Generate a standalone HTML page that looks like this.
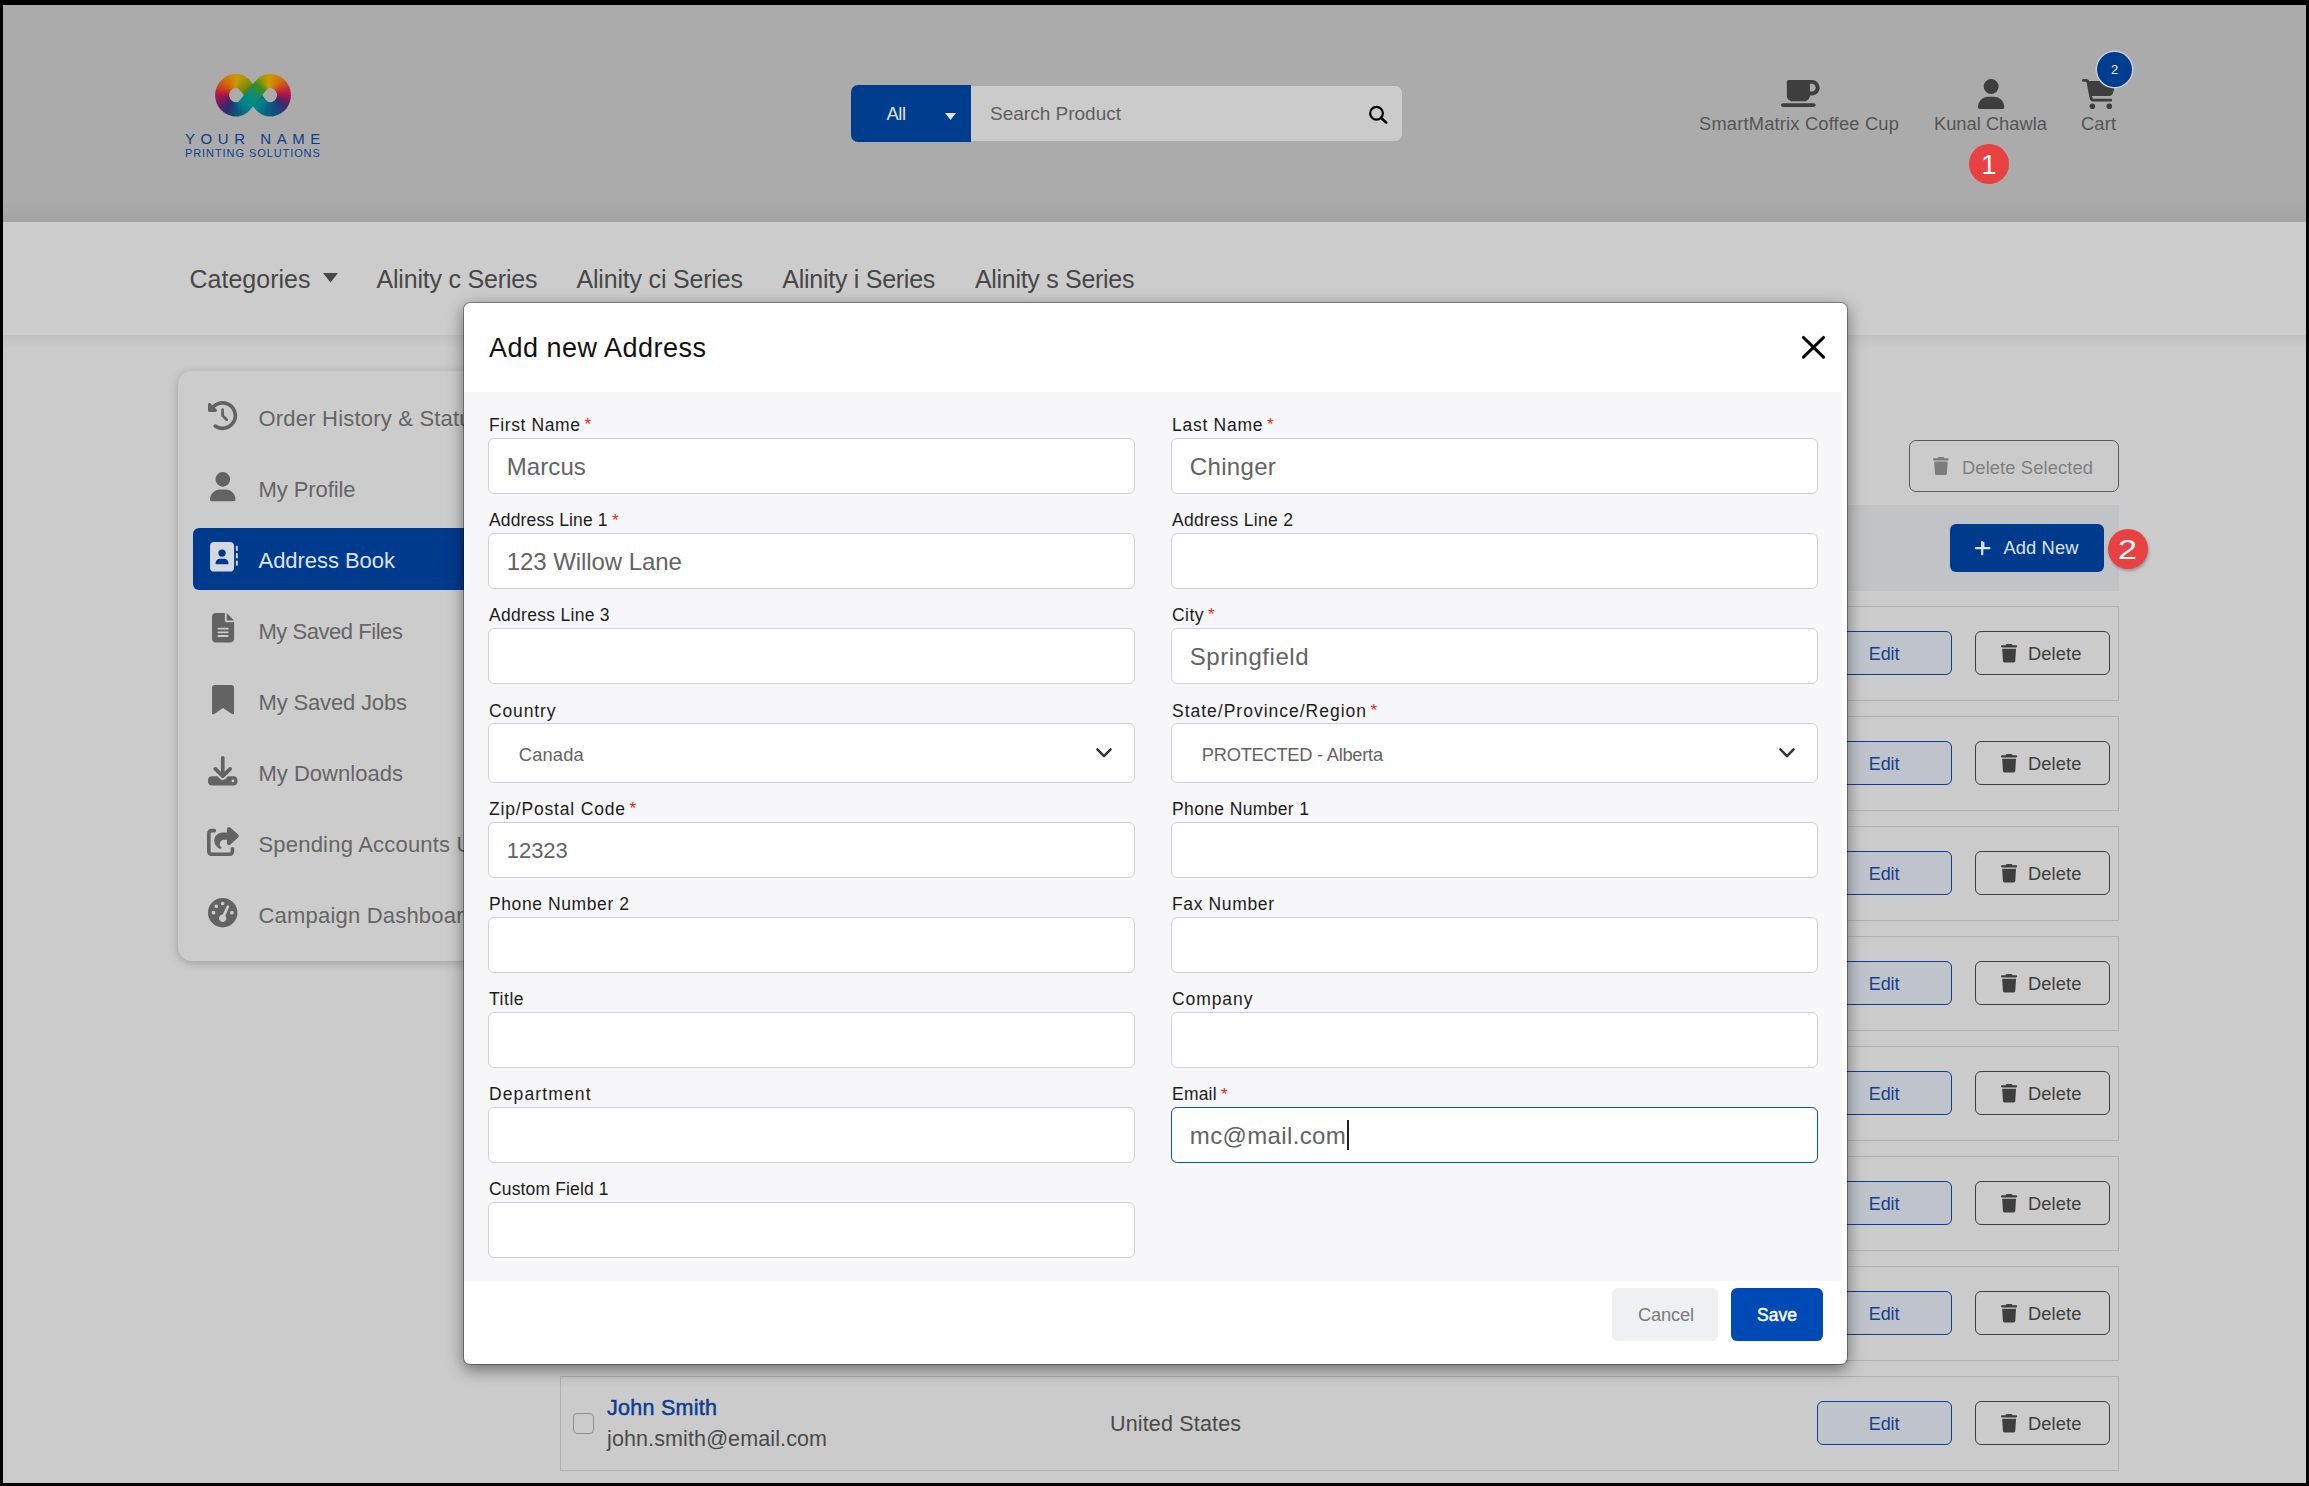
<!DOCTYPE html>
<html><head><meta charset="utf-8"><title>Add new Address</title>
<style>
html,body{margin:0;padding:0;}
body{width:2309px;height:1486px;position:relative;overflow:hidden;background:#cbcbcb;font-family:"Liberation Sans",sans-serif;}
.a{position:absolute;}
.t{position:absolute;white-space:nowrap;line-height:1;}
</style></head><body>
<div class="a" style="left:0px;top:0px;width:2309px;height:222px;background:#ababab;"></div>
<div class="a" style="left:0px;top:200px;width:2309px;height:22px;background:linear-gradient(#ababab,#a4a4a4);"></div>
<div class="a" style="left:0px;top:222px;width:2309px;height:113px;background:#cccccc;"></div>
<div class="a" style="left:0px;top:335px;width:2309px;height:14px;background:linear-gradient(#c1c1c1,#cbcbcb);"></div>
<svg class="a" style="left:0;top:0;overflow:visible" width="1" height="1"><g><path d="M237.20 80.75L233.92 80.97" stroke="#cf9801" stroke-width="13.8"/><path d="M235.31 80.79L232.09 81.43" stroke="#d08f03" stroke-width="13.8"/><path d="M233.44 81.07L230.33 82.12" stroke="#d18605" stroke-width="13.8"/><path d="M231.62 81.59L228.67 83.04" stroke="#d17d07" stroke-width="13.8"/><path d="M229.88 82.34L227.15 84.16" stroke="#d27509" stroke-width="13.8"/><path d="M228.26 83.31L225.79 85.48" stroke="#d16a0d" stroke-width="13.8"/><path d="M226.78 84.49L224.61 86.96" stroke="#ce5e10" stroke-width="13.8"/><path d="M225.46 85.85L223.64 88.58" stroke="#cc5314" stroke-width="13.8"/><path d="M224.34 87.37L222.89 90.32" stroke="#ca4718" stroke-width="13.8"/><path d="M223.42 89.03L222.37 92.14" stroke="#c63a21" stroke-width="13.8"/><path d="M222.73 90.79L222.09 94.01" stroke="#be2a32" stroke-width="13.8"/><path d="M222.27 92.62L222.05 95.90" stroke="#b71a43" stroke-width="13.8"/><path d="M222.05 94.50L222.27 97.78" stroke="#a9144f" stroke-width="13.8"/><path d="M222.09 96.39L222.73 99.61" stroke="#941755" stroke-width="13.8"/><path d="M222.37 98.26L223.42 101.37" stroke="#7f1a5b" stroke-width="13.8"/><path d="M222.89 100.08L224.34 103.03" stroke="#6b1d61" stroke-width="13.8"/><path d="M223.64 101.82L225.46 104.55" stroke="#582066" stroke-width="13.8"/><path d="M224.61 103.44L226.78 105.91" stroke="#4c2469" stroke-width="13.8"/><path d="M225.79 104.92L228.26 107.09" stroke="#40286b" stroke-width="13.8"/><path d="M227.15 106.24L229.88 108.06" stroke="#352b6e" stroke-width="13.8"/><path d="M228.67 107.36L231.62 108.81" stroke="#293070" stroke-width="13.8"/><path d="M230.33 108.28L233.44 109.33" stroke="#223974" stroke-width="13.8"/><path d="M232.09 108.97L235.31 109.61" stroke="#1a4278" stroke-width="13.8"/><path d="M233.92 109.43L237.20 109.65" stroke="#134b7c" stroke-width="13.8"/><path d="M268.90 80.75L272.18 80.97" stroke="#cf9801" stroke-width="13.8"/><path d="M270.79 80.79L274.01 81.43" stroke="#d09003" stroke-width="13.8"/><path d="M272.66 81.07L275.77 82.12" stroke="#d18805" stroke-width="13.8"/><path d="M274.48 81.59L277.43 83.04" stroke="#d18007" stroke-width="13.8"/><path d="M276.22 82.34L278.95 84.16" stroke="#d27809" stroke-width="13.8"/><path d="M277.84 83.31L280.31 85.48" stroke="#d06b11" stroke-width="13.8"/><path d="M279.32 84.49L281.49 86.96" stroke="#cd5a1b" stroke-width="13.8"/><path d="M280.64 85.85L282.46 88.58" stroke="#ca4a25" stroke-width="13.8"/><path d="M281.76 87.37L283.21 90.32" stroke="#c73a2f" stroke-width="13.8"/><path d="M282.68 89.03L283.73 92.14" stroke="#c42a39" stroke-width="13.8"/><path d="M283.37 90.79L284.01 94.01" stroke="#b92241" stroke-width="13.8"/><path d="M283.83 92.62L284.05 95.90" stroke="#ac1b49" stroke-width="13.8"/><path d="M284.05 94.50L283.83 97.78" stroke="#a01450" stroke-width="13.8"/><path d="M284.01 96.39L283.37 99.61" stroke="#881958" stroke-width="13.8"/><path d="M283.73 98.26L282.68 101.37" stroke="#701e5f" stroke-width="13.8"/><path d="M283.21 100.08L281.76 103.03" stroke="#592366" stroke-width="13.8"/><path d="M282.46 101.82L280.64 104.55" stroke="#41286e" stroke-width="13.8"/><path d="M281.49 103.44L279.32 105.91" stroke="#352f72" stroke-width="13.8"/><path d="M280.31 104.92L277.84 107.09" stroke="#2d3775" stroke-width="13.8"/><path d="M278.95 106.24L276.22 108.06" stroke="#263e78" stroke-width="13.8"/><path d="M277.43 107.36L274.48 108.81" stroke="#1f457a" stroke-width="13.8"/><path d="M275.77 108.28L272.66 109.33" stroke="#184c7d" stroke-width="13.8"/><path d="M274.01 108.97L270.79 109.61" stroke="#12527e" stroke-width="13.8"/><path d="M272.18 109.43L268.90 109.65" stroke="#0d577f" stroke-width="13.8"/><path d="M235.80 80.73L238.99 81.05" stroke="#c99b01" stroke-width="13.8"/><path d="M237.63 80.77L240.62 81.69" stroke="#bd9802" stroke-width="13.8"/><path d="M239.33 81.16L242.10 82.60" stroke="#b19603" stroke-width="13.8"/><path d="M240.91 81.87L243.47 83.72" stroke="#a69305" stroke-width="13.8"/><path d="M242.39 82.84L244.76 85.02" stroke="#9a9106" stroke-width="13.8"/><path d="M243.77 84.03L246.00 86.45" stroke="#8e8e08" stroke-width="13.8"/><path d="M245.08 85.40L247.21 87.98" stroke="#828c09" stroke-width="13.8"/><path d="M246.34 86.89L248.41 89.58" stroke="#75870b" stroke-width="13.8"/><path d="M247.56 88.46L249.62 91.19" stroke="#637e0f" stroke-width="13.8"/><path d="M248.77 90.08L250.86 92.78" stroke="#517613" stroke-width="13.8"/><path d="M249.99 91.69L252.16 94.30" stroke="#3f6d17" stroke-width="13.8"/><path d="M251.24 93.25L253.53 95.71" stroke="#2c6a32" stroke-width="13.8"/><path d="M252.57 94.69L254.86 97.15" stroke="#186a56" stroke-width="13.8"/><path d="M253.94 96.10L256.11 98.71" stroke="#096c72" stroke-width="13.8"/><path d="M255.24 97.62L257.33 100.32" stroke="#077178" stroke-width="13.8"/><path d="M256.48 99.21L258.54 101.94" stroke="#05777f" stroke-width="13.8"/><path d="M257.69 100.82L259.76 103.51" stroke="#037d85" stroke-width="13.8"/><path d="M258.89 102.42L261.02 105.00" stroke="#01828c" stroke-width="13.8"/><path d="M260.10 103.95L262.33 106.37" stroke="#01818e" stroke-width="13.8"/><path d="M261.34 105.38L263.71 107.56" stroke="#027a8b" stroke-width="13.8"/><path d="M262.63 106.68L265.19 108.53" stroke="#047389" stroke-width="13.8"/><path d="M264.00 107.80L266.77 109.24" stroke="#066c86" stroke-width="13.8"/><path d="M265.48 108.71L268.47 109.63" stroke="#086584" stroke-width="13.8"/><path d="M267.11 109.35L270.30 109.67" stroke="#095e81" stroke-width="13.8"/><path d="M235.80 109.67L238.99 109.35" stroke="#0e547f" stroke-width="13.8"/><path d="M237.63 109.63L240.62 108.71" stroke="#0b5d82" stroke-width="13.8"/><path d="M239.33 109.24L242.10 107.80" stroke="#096684" stroke-width="13.8"/><path d="M240.91 108.53L243.47 106.68" stroke="#066f86" stroke-width="13.8"/><path d="M242.39 107.56L244.76 105.38" stroke="#047888" stroke-width="13.8"/><path d="M243.77 106.37L246.00 103.95" stroke="#01818b" stroke-width="13.8"/><path d="M245.08 105.00L247.21 102.42" stroke="#01868a" stroke-width="13.8"/><path d="M246.34 103.51L248.41 100.82" stroke="#028887" stroke-width="13.8"/><path d="M247.56 101.94L249.62 99.21" stroke="#048884" stroke-width="13.8"/><path d="M248.77 100.32L250.86 97.62" stroke="#068a80" stroke-width="13.8"/><path d="M249.99 98.71L252.16 96.10" stroke="#088a7d" stroke-width="13.8"/><path d="M251.24 97.15L253.53 94.69" stroke="#098c7a" stroke-width="13.8"/><path d="M252.57 95.71L254.86 93.25" stroke="#0f8c70" stroke-width="13.8"/><path d="M253.94 94.30L256.11 91.69" stroke="#188b5f" stroke-width="13.8"/><path d="M255.24 92.78L257.33 90.08" stroke="#218b4e" stroke-width="13.8"/><path d="M256.48 91.19L258.54 88.46" stroke="#2a8b3e" stroke-width="13.8"/><path d="M257.69 89.58L259.76 86.89" stroke="#338a2d" stroke-width="13.8"/><path d="M258.89 87.98L261.02 85.40" stroke="#3f8b1e" stroke-width="13.8"/><path d="M260.10 86.45L262.33 84.03" stroke="#598f17" stroke-width="13.8"/><path d="M261.34 85.02L263.71 82.84" stroke="#729310" stroke-width="13.8"/><path d="M262.63 83.72L265.19 81.87" stroke="#8a9709" stroke-width="13.8"/><path d="M264.00 82.60L266.77 81.16" stroke="#a19a04" stroke-width="13.8"/><path d="M265.48 81.69L268.47 80.77" stroke="#b39b03" stroke-width="13.8"/><path d="M267.11 81.05L270.30 80.73" stroke="#c69c01" stroke-width="13.8"/></g></svg>
<div class="t" style="left:185px;top:131.00px;font-size:15px;color:#0e3e8e;letter-spacing:5.55px;">YOUR NAME</div>
<div class="t" style="left:185px;top:148.00px;font-size:11px;color:#0e3e8e;letter-spacing:0.92px;">PRINTING SOLUTIONS</div>
<div class="a" style="left:851px;top:85px;width:120px;height:57px;background:#003d8f;border-radius:7px 0 0 7px;"></div>
<div class="t" style="left:886.5px;top:105.00px;font-size:18.5px;color:#dfe4ee;letter-spacing:-0.531px;">All</div>
<svg class="a" style="left:944.5px;top:112.8px;" width="11" height="7" viewBox="0 0 11 7"><path d="M0 0 L11 0 L5.5 7 Z" fill="#dfe4ee"/></svg>
<div class="a" style="left:971px;top:86px;width:431px;height:55px;background:#cbcbcb;border-radius:0 7px 7px 0;"></div>
<div class="t" style="left:990px;top:104.00px;font-size:19px;color:#5f5f5f;letter-spacing:0.003px;">Search Product</div>
<svg class="a" style="left:1368px;top:105px;" width="21" height="21" viewBox="0 0 21 21"><circle cx="8.5" cy="8.3" r="6.35" fill="none" stroke="#000" stroke-width="2.2"/><path d="M13.2 13 L18.2 17.6" stroke="#000" stroke-width="2.6" stroke-linecap="round"/></svg>
<svg class="a" style="left:1780.5px;top:80px;overflow:visible;" width="38.6" height="27" viewBox="0 32 640 448"><path d="M96 64c0-17.7 14.3-32 32-32H448h64c70.7 0 128 57.3 128 128s-57.3 128-128 128H480c0 53-43 96-96 96H192c-53 0-96-43-96-96V64zM480 224h32c35.3 0 64-28.7 64-64s-28.7-64-64-64H480V224zM32 416H544c17.7 0 32 14.3 32 32s-14.3 32-32 32H32c-17.7 0-32-14.3-32-32s14.3-32 32-32z" fill="#3e3e3e"/></svg>
<div class="t" style="left:1699px;top:115.00px;font-size:18.3px;color:#555555;letter-spacing:0.193px;">SmartMatrix Coffee Cup</div>
<svg class="a" style="left:1977.5px;top:78.5px;overflow:visible;" width="26.3" height="30.1" viewBox="0 0 448 512"><path d="M224 256A128 128 0 1 0 224 0a128 128 0 1 0 0 256zm-45.7 48C79.8 304 0 383.8 0 482.3C0 498.7 13.3 512 29.7 512H418.3c16.4 0 29.7-13.3 29.7-29.7C448 383.8 368.2 304 269.7 304H178.3z" fill="#3e3e3e"/></svg>
<div class="t" style="left:1934px;top:115.00px;font-size:18.3px;color:#555555;letter-spacing:0.007px;">Kunal Chawla</div>
<svg class="a" style="left:2081.5px;top:78.5px;overflow:visible;" width="33.9" height="30.1" viewBox="0 0 576 512"><path d="M0 24C0 10.7 10.7 0 24 0H69.5c22 0 41.5 12.8 50.6 32h411c26.3 0 45.5 25 38.6 50.4l-41 152.3c-8.5 31.4-37 53.3-69.5 53.3H170.7l5.4 28.5c2.2 11.3 12.1 19.5 23.6 19.5H488c13.3 0 24 10.7 24 24s-10.7 24-24 24H199.7c-34.6 0-64.3-24.6-70.7-58.5L77.4 54.5c-.7-3.8-4-6.5-7.9-6.5H24C10.7 48 0 37.3 0 24zM128 464a48 48 0 1 1 96 0 48 48 0 1 1 -96 0zm336-48a48 48 0 1 1 0 96 48 48 0 1 1 0-96z" fill="#3e3e3e"/></svg>
<div class="t" style="left:2081px;top:115.00px;font-size:18.3px;color:#555555;letter-spacing:0.142px;">Cart</div>
<div class="a" style="left:2097px;top:51.5px;width:35px;height:35px;background:#003d8f;border-radius:50%;box-shadow:0 0 0 1.5px #c8cdd6;"></div>
<div class="t" style="left:2111px;top:63.00px;font-size:13px;color:#e6e9f0;">2</div>
<div class="a" style="left:1969px;top:144px;width:40px;height:40px;background:#e84142;border-radius:50%;"></div>
<div class="t" style="left:1981px;top:151.00px;font-size:28px;color:#ffffff;">1</div>
<div class="t" style="left:189.5px;top:267.00px;font-size:25px;color:#474747;letter-spacing:0.011px;">Categories</div>
<svg class="a" style="left:323px;top:273px;" width="15" height="10" viewBox="0 0 15 10"><path d="M0 0 H15 L7.5 9.5 Z" fill="#474747"/></svg>
<div class="t" style="left:376.5px;top:267.00px;font-size:25px;color:#474747;letter-spacing:-0.196px;">Alinity c Series</div>
<div class="t" style="left:576.5px;top:267.00px;font-size:25px;color:#474747;letter-spacing:-0.194px;">Alinity ci Series</div>
<div class="t" style="left:782.3px;top:267.00px;font-size:25px;color:#474747;letter-spacing:-0.267px;">Alinity i Series</div>
<div class="t" style="left:975px;top:267.00px;font-size:25px;color:#474747;letter-spacing:-0.303px;">Alinity s Series</div>
<div class="a" style="left:178px;top:371px;width:560px;height:590px;background:#cccccc;border-radius:14px;box-shadow:0 2px 10px rgba(0,0,0,0.22);"></div>
<div class="a" style="left:193px;top:528px;width:400px;height:62px;background:#003a8c;border-radius:6px;"></div>
<div class="t" style="left:258.5px;top:408.00px;font-size:22px;color:#656565;letter-spacing:0.2px;">Order History &amp; Status</div>
<div class="t" style="left:258.5px;top:479.00px;font-size:22px;color:#656565;letter-spacing:-0.089px;">My Profile</div>
<div class="t" style="left:258.5px;top:550.00px;font-size:22px;color:#dde1ea;letter-spacing:-0.042px;">Address Book</div>
<div class="t" style="left:258.5px;top:621.00px;font-size:22px;color:#656565;letter-spacing:-0.46px;">My Saved Files</div>
<div class="t" style="left:258.5px;top:692.00px;font-size:22px;color:#656565;letter-spacing:-0.159px;">My Saved Jobs</div>
<div class="t" style="left:258.5px;top:763.00px;font-size:22px;color:#656565;letter-spacing:0.011px;">My Downloads</div>
<div class="t" style="left:258.5px;top:834.00px;font-size:22px;color:#656565;letter-spacing:0.2px;">Spending Accounts Usage</div>
<div class="t" style="left:258.5px;top:905.00px;font-size:22px;color:#656565;letter-spacing:0.2px;">Campaign Dashboard</div>
<svg class="a" style="left:207.8px;top:400.6px;overflow:visible;" width="29.2" height="29.2" viewBox="0 0 512 512"><path d="M75 75L41 41C25.9 25.9 0 36.6 0 57.9V168c0 13.3 10.7 24 24 24H134.1c21.4 0 32.1-25.9 17-41l-30.8-30.8C155 85.5 203 64 256 64c106 0 192 86 192 192s-86 192-192 192c-40.8 0-78.6-12.7-109.7-34.4c-14.5-10.1-34.4-6.6-44.6 7.9s-6.6 34.4 7.9 44.6C151.2 495 201.7 512 256 512c141.4 0 256-114.6 256-256S397.4 0 256 0C185.3 0 121.3 28.7 75 75zm181 53c-13.3 0-24 10.7-24 24V256c0 6.4 2.5 12.5 7 17l72 72c9.4 9.4 24.6 9.4 33.9 0s9.4-24.6 0-33.9l-65-65V152c0-13.3-10.7-24-24-24z" fill="#636363"/></svg>
<svg class="a" style="left:209.8px;top:471.7px;overflow:visible;" width="25.6" height="29.3" viewBox="0 0 448 512"><path d="M224 256A128 128 0 1 0 224 0a128 128 0 1 0 0 256zm-45.7 48C79.8 304 0 383.8 0 482.3C0 498.7 13.3 512 29.7 512H418.3c16.4 0 29.7-13.3 29.7-29.7C448 383.8 368.2 304 269.7 304H178.3z" fill="#636363"/></svg>
<svg class="a" style="left:209.6px;top:542.4px;overflow:visible;" width="27.8" height="29.6" viewBox="32 0 480 512"><path d="M96 0C60.7 0 32 28.7 32 64V448c0 35.3 28.7 64 64 64H384c35.3 0 64-28.7 64-64V64c0-35.3-28.7-64-64-64H96zM512 80c0-8.8-7.2-16-16-16s-16 7.2-16 16v64c0 8.8 7.2 16 16 16s16-7.2 16-16V80zM496 192c-8.8 0-16 7.2-16 16v64c0 8.8 7.2 16 16 16s16-7.2 16-16V208c0-8.8-7.2-16-16-16zm16 144c0-8.8-7.2-16-16-16s-16 7.2-16 16v64c0 8.8 7.2 16 16 16s16-7.2 16-16V336z" fill="#d3d8e1"/></svg>
<svg class="a" style="left:209.6px;top:542.4px;overflow:visible;" width="27.8" height="29.6" viewBox="32 0 480 512"><path d="M208 288h64c44.2 0 80 35.8 80 80c0 8.8-7.2 16-16 16H144c-8.8 0-16-7.2-16-16c0-44.2 35.8-80 80-80zm-32-96a64 64 0 1 1 128 0 64 64 0 1 1 -128 0z" fill="#003a8c"/></svg>
<svg class="a" style="left:211.8px;top:613.3px;overflow:visible;" width="22.1" height="29.5" viewBox="0 0 384 512"><path d="M64 0C28.7 0 0 28.7 0 64V448c0 35.3 28.7 64 64 64H320c35.3 0 64-28.7 64-64V160H256c-17.7 0-32-14.3-32-32V0H64zM256 0V128H384L256 0zM112 256H272c8.8 0 16 7.2 16 16s-7.2 16-16 16H112c-8.8 0-16-7.2-16-16s7.2-16 16-16zm0 64H272c8.8 0 16 7.2 16 16s-7.2 16-16 16H112c-8.8 0-16-7.2-16-16s7.2-16 16-16zm0 64H272c8.8 0 16 7.2 16 16s-7.2 16-16 16H112c-8.8 0-16-7.2-16-16s7.2-16 16-16z" fill="#636363"/></svg>
<svg class="a" style="left:211.8px;top:684.7px;overflow:visible;" width="22.1" height="29.3" viewBox="0 0 384 512"><path d="M0 48V487.7C0 501.1 10.9 512 24.3 512c5 0 9.9-1.6 14-4.4L192 400 345.7 507.6c4.1 2.9 9 4.4 14 4.4c13.4 0 24.3-10.9 24.3-24.3V48c0-26.5-21.5-48-48-48H48C21.5 0 0 21.5 0 48z" fill="#636363"/></svg>
<svg class="a" style="left:207.6px;top:755.7px;overflow:visible;" width="29.5" height="29.5" viewBox="0 0 512 512"><path d="M288 32c0-17.7-14.3-32-32-32s-32 14.3-32 32V274.7l-73.4-73.4c-12.5-12.5-32.8-12.5-45.3 0s-12.5 32.8 0 45.3l128 128c12.5 12.5 32.8 12.5 45.3 0l128-128c12.5-12.5 12.5-32.8 0-45.3s-32.8-12.5-45.3 0L288 274.7V32zM64 352c-35.3 0-64 28.7-64 64v32c0 35.3 28.7 64 64 64H448c35.3 0 64-28.7 64-64V416c0-35.3-28.7-64-64-64H346.5l-45.3 45.3c-25 25-65.5 25-90.5 0L165.5 352H64zm368 56a24 24 0 1 1 0 48 24 24 0 1 1 0-48z" fill="#636363"/></svg>
<svg class="a" style="left:207.4px;top:826.7px;overflow:visible;" width="32.7" height="29.1" viewBox="0 0 576 512"><path d="M352 224H305.5c-45 0-81.5 36.5-81.5 81.5c0 22.3 10.3 34.3 19.2 40.5c6.8 4.7 12.8 12 12.8 20.3c0 9.8-8 17.8-17.8 17.8h-2.5c-2.4 0-4.8-.4-7.1-1.4C210.8 374.8 128 333.4 128 240c0-79.5 64.5-144 144-144h80V34.7C352 15.5 367.5 0 386.7 0c8.6 0 16.8 3.2 23.2 8.9L548.1 133.3c7.6 6.8 11.9 16.5 11.900 26.7s-4.3 19.9-11.9 26.7l-139 125.1c-5.9 5.3-13.5 8.2-21.4 8.2H384c-17.7 0-32-14.3-32-32V224zM80 96c-8.8 0-16 7.2-16 16V432c0 8.8 7.2 16 16 16H400c8.8 0 16-7.2 16-16V384c0-17.7 14.3-32 32-32s32 14.3 32 32v48c0 44.2-35.8 80-80 80H80c-44.2 0-80-35.8-80-80V112C0 67.8 35.8 32 80 32h48c17.7 0 32 14.300 32 32s-14.3 32-32 32H80z" fill="#636363"/></svg>
<svg class="a" style="left:208px;top:897.7px;overflow:visible;" width="29.4" height="29.4" viewBox="0 0 512 512"><path d="M0 256a256 256 0 1 1 512 0A256 256 0 1 1 0 256zM288 96a32 32 0 1 0 -64 0 32 32 0 1 0 64 0zM256 416c35.3 0 64-28.7 64-64c0-17.4-6.9-33.1-18.1-44.6L366 161.7c5.3-12.1-.2-26.3-12.3-31.6s-26.3 .2-31.6 12.3L257.9 288c-.6 0-1.3 0-1.9 0c-35.3 0-64 28.7-64 64s28.7 64 64 64zM176 144a32 32 0 1 0 -64 0 32 32 0 1 0 64 0zM96 288a32 32 0 1 0 0-64 32 32 0 1 0 0 64zm352-32a32 32 0 1 0 -64 0 32 32 0 1 0 64 0z" fill="#636363"/></svg>
<div class="a" style="left:1909px;top:440px;width:208px;height:50px;border:1.3px solid #5c5c5c;border-radius:7px;"></div>
<svg class="a" style="left:1933.2px;top:457px;overflow:visible;" width="15.8" height="18" viewBox="0 0 448 512"><path d="M135.2 17.7L128 32H32C14.3 32 0 46.3 0 64S14.3 96 32 96H416c17.7 0 32-14.3 32-32s-14.3-32-32-32H320l-7.2-14.3C307.4 6.8 296.3 0 284.2 0H163.8c-12.1 0-23.2 6.8-28.6 17.7zM416 128H32L53.2 467c1.6 25.3 22.6 45 47.9 45H346.9c25.3 0 46.3-19.7 47.9-45L416 128z" fill="#7c7c7c"/></svg>
<div class="t" style="left:1962px;top:459.00px;font-size:18.3px;color:#7f7f7f;letter-spacing:0.128px;">Delete Selected</div>
<div class="a" style="left:600px;top:505px;width:1519px;height:86px;background:#c2c3c6;"></div>
<div class="a" style="left:1950px;top:524px;width:154px;height:48px;background:#003a8c;border-radius:6px;"></div>
<svg class="a" style="left:1975px;top:540.6px;overflow:visible;" width="15.5" height="14.4" viewBox="16 48 448 416"><path d="M256 80c0-17.7-14.3-32-32-32s-32 14.3-32 32V224H48c-17.7 0-32 14.3-32 32s14.3 32 32 32H192V432c0 17.7 14.3 32 32 32s32-14.3 32-32V288H432c17.7 0 32-14.3 32-32s-14.3-32-32-32H288V80z" fill="#dde2ec"/></svg>
<div class="t" style="left:2003.5px;top:539.00px;font-size:18.3px;color:#dde2ec;letter-spacing:0.124px;">Add New</div>
<div class="a" style="left:2108px;top:529px;width:40px;height:40px;background:#e84142;border-radius:50%;box-shadow:1px 2px 3px rgba(0,0,0,0.25);"></div>
<div class="t" style="left:2117.5px;top:536.00px;font-size:28px;color:#ffffff;transform:scaleX(1.22);transform-origin:0 0;">2</div>
<div class="a" style="left:560px;top:606px;width:1559px;height:95px;box-sizing:border-box;border:1.3px solid #adb1b6;"></div>
<div class="a" style="left:1817px;top:631px;width:135px;height:44px;box-sizing:border-box;background:#bfc3cc;border:1.5px solid #0c3f93;border-radius:6px;"></div>
<div class="t" style="left:1868.8px;top:645.00px;font-size:18px;color:#163f8a;letter-spacing:-0.139px;">Edit</div>
<div class="a" style="left:1975px;top:631px;width:135px;height:44px;box-sizing:border-box;border:1.4px solid #3e3e3e;border-radius:6px;"></div>
<svg class="a" style="left:2000.8px;top:644px;overflow:visible;" width="16.2" height="18.5" viewBox="0 0 448 512"><path d="M135.2 17.7L128 32H32C14.3 32 0 46.3 0 64S14.3 96 32 96H416c17.7 0 32-14.3 32-32s-14.3-32-32-32H320l-7.2-14.3C307.4 6.8 296.3 0 284.2 0H163.8c-12.1 0-23.2 6.8-28.6 17.7zM416 128H32L53.2 467c1.6 25.3 22.6 45 47.9 45H346.9c25.3 0 46.3-19.7 47.9-45L416 128z" fill="#3e3e3e"/></svg>
<div class="t" style="left:2028px;top:645.00px;font-size:18.3px;color:#3e3e3e;letter-spacing:0.12px;">Delete</div>
<div class="a" style="left:560px;top:716px;width:1559px;height:95px;box-sizing:border-box;border:1.3px solid #adb1b6;"></div>
<div class="a" style="left:1817px;top:741px;width:135px;height:44px;box-sizing:border-box;background:#bfc3cc;border:1.5px solid #0c3f93;border-radius:6px;"></div>
<div class="t" style="left:1868.8px;top:755.00px;font-size:18px;color:#163f8a;letter-spacing:-0.139px;">Edit</div>
<div class="a" style="left:1975px;top:741px;width:135px;height:44px;box-sizing:border-box;border:1.4px solid #3e3e3e;border-radius:6px;"></div>
<svg class="a" style="left:2000.8px;top:754px;overflow:visible;" width="16.2" height="18.5" viewBox="0 0 448 512"><path d="M135.2 17.7L128 32H32C14.3 32 0 46.3 0 64S14.3 96 32 96H416c17.7 0 32-14.3 32-32s-14.3-32-32-32H320l-7.2-14.3C307.4 6.8 296.3 0 284.2 0H163.8c-12.1 0-23.2 6.8-28.6 17.7zM416 128H32L53.2 467c1.6 25.3 22.6 45 47.9 45H346.9c25.3 0 46.3-19.7 47.9-45L416 128z" fill="#3e3e3e"/></svg>
<div class="t" style="left:2028px;top:755.00px;font-size:18.3px;color:#3e3e3e;letter-spacing:0.12px;">Delete</div>
<div class="a" style="left:560px;top:826px;width:1559px;height:95px;box-sizing:border-box;border:1.3px solid #adb1b6;"></div>
<div class="a" style="left:1817px;top:851px;width:135px;height:44px;box-sizing:border-box;background:#bfc3cc;border:1.5px solid #0c3f93;border-radius:6px;"></div>
<div class="t" style="left:1868.8px;top:865.00px;font-size:18px;color:#163f8a;letter-spacing:-0.139px;">Edit</div>
<div class="a" style="left:1975px;top:851px;width:135px;height:44px;box-sizing:border-box;border:1.4px solid #3e3e3e;border-radius:6px;"></div>
<svg class="a" style="left:2000.8px;top:864px;overflow:visible;" width="16.2" height="18.5" viewBox="0 0 448 512"><path d="M135.2 17.7L128 32H32C14.3 32 0 46.3 0 64S14.3 96 32 96H416c17.7 0 32-14.3 32-32s-14.3-32-32-32H320l-7.2-14.3C307.4 6.8 296.3 0 284.2 0H163.8c-12.1 0-23.2 6.8-28.6 17.7zM416 128H32L53.2 467c1.6 25.3 22.6 45 47.9 45H346.9c25.3 0 46.3-19.7 47.9-45L416 128z" fill="#3e3e3e"/></svg>
<div class="t" style="left:2028px;top:865.00px;font-size:18.3px;color:#3e3e3e;letter-spacing:0.12px;">Delete</div>
<div class="a" style="left:560px;top:936px;width:1559px;height:95px;box-sizing:border-box;border:1.3px solid #adb1b6;"></div>
<div class="a" style="left:1817px;top:961px;width:135px;height:44px;box-sizing:border-box;background:#bfc3cc;border:1.5px solid #0c3f93;border-radius:6px;"></div>
<div class="t" style="left:1868.8px;top:975.00px;font-size:18px;color:#163f8a;letter-spacing:-0.139px;">Edit</div>
<div class="a" style="left:1975px;top:961px;width:135px;height:44px;box-sizing:border-box;border:1.4px solid #3e3e3e;border-radius:6px;"></div>
<svg class="a" style="left:2000.8px;top:974px;overflow:visible;" width="16.2" height="18.5" viewBox="0 0 448 512"><path d="M135.2 17.7L128 32H32C14.3 32 0 46.3 0 64S14.3 96 32 96H416c17.7 0 32-14.3 32-32s-14.3-32-32-32H320l-7.2-14.3C307.4 6.8 296.3 0 284.2 0H163.8c-12.1 0-23.2 6.8-28.6 17.7zM416 128H32L53.2 467c1.6 25.3 22.6 45 47.9 45H346.9c25.3 0 46.3-19.7 47.9-45L416 128z" fill="#3e3e3e"/></svg>
<div class="t" style="left:2028px;top:975.00px;font-size:18.3px;color:#3e3e3e;letter-spacing:0.12px;">Delete</div>
<div class="a" style="left:560px;top:1046px;width:1559px;height:95px;box-sizing:border-box;border:1.3px solid #adb1b6;"></div>
<div class="a" style="left:1817px;top:1071px;width:135px;height:44px;box-sizing:border-box;background:#bfc3cc;border:1.5px solid #0c3f93;border-radius:6px;"></div>
<div class="t" style="left:1868.8px;top:1085.00px;font-size:18px;color:#163f8a;letter-spacing:-0.139px;">Edit</div>
<div class="a" style="left:1975px;top:1071px;width:135px;height:44px;box-sizing:border-box;border:1.4px solid #3e3e3e;border-radius:6px;"></div>
<svg class="a" style="left:2000.8px;top:1084px;overflow:visible;" width="16.2" height="18.5" viewBox="0 0 448 512"><path d="M135.2 17.7L128 32H32C14.3 32 0 46.3 0 64S14.3 96 32 96H416c17.7 0 32-14.3 32-32s-14.3-32-32-32H320l-7.2-14.3C307.4 6.8 296.3 0 284.2 0H163.8c-12.1 0-23.2 6.8-28.6 17.7zM416 128H32L53.2 467c1.6 25.3 22.6 45 47.9 45H346.9c25.3 0 46.3-19.7 47.9-45L416 128z" fill="#3e3e3e"/></svg>
<div class="t" style="left:2028px;top:1085.00px;font-size:18.3px;color:#3e3e3e;letter-spacing:0.12px;">Delete</div>
<div class="a" style="left:560px;top:1156px;width:1559px;height:95px;box-sizing:border-box;border:1.3px solid #adb1b6;"></div>
<div class="a" style="left:1817px;top:1181px;width:135px;height:44px;box-sizing:border-box;background:#bfc3cc;border:1.5px solid #0c3f93;border-radius:6px;"></div>
<div class="t" style="left:1868.8px;top:1195.00px;font-size:18px;color:#163f8a;letter-spacing:-0.139px;">Edit</div>
<div class="a" style="left:1975px;top:1181px;width:135px;height:44px;box-sizing:border-box;border:1.4px solid #3e3e3e;border-radius:6px;"></div>
<svg class="a" style="left:2000.8px;top:1194px;overflow:visible;" width="16.2" height="18.5" viewBox="0 0 448 512"><path d="M135.2 17.7L128 32H32C14.3 32 0 46.3 0 64S14.3 96 32 96H416c17.7 0 32-14.3 32-32s-14.3-32-32-32H320l-7.2-14.3C307.4 6.8 296.3 0 284.2 0H163.8c-12.1 0-23.2 6.8-28.6 17.7zM416 128H32L53.2 467c1.6 25.3 22.6 45 47.9 45H346.9c25.3 0 46.3-19.7 47.9-45L416 128z" fill="#3e3e3e"/></svg>
<div class="t" style="left:2028px;top:1195.00px;font-size:18.3px;color:#3e3e3e;letter-spacing:0.12px;">Delete</div>
<div class="a" style="left:560px;top:1266px;width:1559px;height:95px;box-sizing:border-box;border:1.3px solid #adb1b6;"></div>
<div class="a" style="left:1817px;top:1291px;width:135px;height:44px;box-sizing:border-box;background:#bfc3cc;border:1.5px solid #0c3f93;border-radius:6px;"></div>
<div class="t" style="left:1868.8px;top:1305.00px;font-size:18px;color:#163f8a;letter-spacing:-0.139px;">Edit</div>
<div class="a" style="left:1975px;top:1291px;width:135px;height:44px;box-sizing:border-box;border:1.4px solid #3e3e3e;border-radius:6px;"></div>
<svg class="a" style="left:2000.8px;top:1304px;overflow:visible;" width="16.2" height="18.5" viewBox="0 0 448 512"><path d="M135.2 17.7L128 32H32C14.3 32 0 46.3 0 64S14.3 96 32 96H416c17.7 0 32-14.3 32-32s-14.3-32-32-32H320l-7.2-14.3C307.4 6.8 296.3 0 284.2 0H163.8c-12.1 0-23.2 6.8-28.6 17.7zM416 128H32L53.2 467c1.6 25.3 22.6 45 47.9 45H346.9c25.3 0 46.3-19.7 47.9-45L416 128z" fill="#3e3e3e"/></svg>
<div class="t" style="left:2028px;top:1305.00px;font-size:18.3px;color:#3e3e3e;letter-spacing:0.12px;">Delete</div>
<div class="a" style="left:560px;top:1376px;width:1559px;height:95px;box-sizing:border-box;border:1.3px solid #adb1b6;"></div>
<div class="a" style="left:1817px;top:1401px;width:135px;height:44px;box-sizing:border-box;background:#bfc3cc;border:1.5px solid #0c3f93;border-radius:6px;"></div>
<div class="t" style="left:1868.8px;top:1415.00px;font-size:18px;color:#163f8a;letter-spacing:-0.139px;">Edit</div>
<div class="a" style="left:1975px;top:1401px;width:135px;height:44px;box-sizing:border-box;border:1.4px solid #3e3e3e;border-radius:6px;"></div>
<svg class="a" style="left:2000.8px;top:1414px;overflow:visible;" width="16.2" height="18.5" viewBox="0 0 448 512"><path d="M135.2 17.7L128 32H32C14.3 32 0 46.3 0 64S14.3 96 32 96H416c17.7 0 32-14.3 32-32s-14.3-32-32-32H320l-7.2-14.3C307.4 6.8 296.3 0 284.2 0H163.8c-12.1 0-23.2 6.8-28.6 17.7zM416 128H32L53.2 467c1.6 25.3 22.6 45 47.9 45H346.9c25.3 0 46.3-19.7 47.9-45L416 128z" fill="#3e3e3e"/></svg>
<div class="t" style="left:2028px;top:1415.00px;font-size:18.3px;color:#3e3e3e;letter-spacing:0.12px;">Delete</div>
<div class="a" style="left:573px;top:1413px;width:21px;height:21px;box-sizing:border-box;border:1.3px solid #8f8f8f;border-radius:4px;"></div>
<div class="t" style="left:607px;top:1398.00px;font-size:21.5px;color:#0d3d8f;letter-spacing:0.272px;-webkit-text-stroke:0.5px #0d3d8f;">John Smith</div>
<div class="t" style="left:607px;top:1429.00px;font-size:21.5px;color:#4a4a4a;letter-spacing:0.116px;">john.smith@email.com</div>
<div class="t" style="left:1110px;top:1414.00px;font-size:21.5px;color:#4a4a4a;letter-spacing:0.16px;">United States</div>
<div class="a" style="left:463px;top:302px;width:1385px;height:1063px;box-sizing:border-box;background:#ffffff;background-clip:padding-box;border:1px solid rgba(0,0,0,0.33);border-radius:7px;box-shadow:0 5px 16px rgba(0,0,0,0.45);"></div>
<div class="a" style="left:464px;top:392px;width:1378px;height:889px;background:#f7f7f9;"></div>
<div class="t" style="left:489px;top:335.00px;font-size:27px;color:#111111;letter-spacing:0.49px;">Add new Address</div>
<svg class="a" style="left:1800px;top:334px;" width="27" height="27" viewBox="0 0 27 27"><path d="M3.5 3.5 L23.5 23.2 M23.5 3.5 L3.5 23.2" stroke="#000" stroke-width="3.1" stroke-linecap="round"/></svg>
<div class="t" style="left:489px;top:417.00px;font-size:17.5px;color:#1c1c1c;letter-spacing:0.604px;">First Name</div>
<div class="t" style="left:584.5px;top:416.00px;font-size:17px;color:#e8262a;">*</div>
<div class="a" style="left:488px;top:438px;width:647px;height:56px;box-sizing:border-box;background:#fff;border:1.4px solid #ccd1d8;border-radius:6px;"></div>
<div class="t" style="left:506.8px;top:455.00px;font-size:24px;color:#636363;letter-spacing:0.063px;">Marcus</div>
<div class="t" style="left:1172px;top:417.00px;font-size:17.5px;color:#1c1c1c;letter-spacing:0.735px;">Last Name</div>
<div class="t" style="left:1267.0px;top:416.00px;font-size:17px;color:#e8262a;">*</div>
<div class="a" style="left:1171px;top:438px;width:647px;height:56px;box-sizing:border-box;background:#fff;border:1.4px solid #ccd1d8;border-radius:6px;"></div>
<div class="t" style="left:1189.8px;top:455.00px;font-size:24px;color:#636363;letter-spacing:0.325px;">Chinger</div>
<div class="t" style="left:489px;top:512.00px;font-size:17.5px;color:#1c1c1c;letter-spacing:0.143px;">Address Line 1</div>
<div class="t" style="left:612.1px;top:512.00px;font-size:17px;color:#e8262a;">*</div>
<div class="a" style="left:488px;top:533px;width:647px;height:56px;box-sizing:border-box;background:#fff;border:1.4px solid #ccd1d8;border-radius:6px;"></div>
<div class="t" style="left:506.8px;top:550.00px;font-size:24px;color:#636363;letter-spacing:-0.079px;">123 Willow Lane</div>
<div class="t" style="left:1172px;top:512.00px;font-size:17.5px;color:#1c1c1c;letter-spacing:0.327px;">Address Line 2</div>
<div class="a" style="left:1171px;top:533px;width:647px;height:56px;box-sizing:border-box;background:#fff;border:1.4px solid #ccd1d8;border-radius:6px;"></div>
<div class="t" style="left:489px;top:607.00px;font-size:17.5px;color:#1c1c1c;letter-spacing:0.297px;">Address Line 3</div>
<div class="a" style="left:488px;top:628px;width:647px;height:56px;box-sizing:border-box;background:#fff;border:1.4px solid #ccd1d8;border-radius:6px;"></div>
<div class="t" style="left:1172px;top:607.00px;font-size:17.5px;color:#1c1c1c;letter-spacing:0.487px;">City</div>
<div class="t" style="left:1208.1px;top:606.00px;font-size:17px;color:#e8262a;">*</div>
<div class="a" style="left:1171px;top:628px;width:647px;height:56px;box-sizing:border-box;background:#fff;border:1.4px solid #ccd1d8;border-radius:6px;"></div>
<div class="t" style="left:1189.8px;top:645.00px;font-size:24px;color:#636363;letter-spacing:0.529px;">Springfield</div>
<div class="t" style="left:489px;top:801.00px;font-size:17.5px;color:#1c1c1c;letter-spacing:0.821px;">Zip/Postal Code</div>
<div class="t" style="left:629.5px;top:800.00px;font-size:17px;color:#e8262a;">*</div>
<div class="a" style="left:488px;top:822px;width:647px;height:56px;box-sizing:border-box;background:#fff;border:1.4px solid #ccd1d8;border-radius:6px;"></div>
<div class="t" style="left:506.8px;top:840.00px;font-size:22px;color:#636363;letter-spacing:-0.045px;">12323</div>
<div class="t" style="left:1172px;top:801.00px;font-size:17.5px;color:#1c1c1c;letter-spacing:0.361px;">Phone Number 1</div>
<div class="a" style="left:1171px;top:822px;width:647px;height:56px;box-sizing:border-box;background:#fff;border:1.4px solid #ccd1d8;border-radius:6px;"></div>
<div class="t" style="left:489px;top:896.00px;font-size:17.5px;color:#1c1c1c;letter-spacing:0.592px;">Phone Number 2</div>
<div class="a" style="left:488px;top:917px;width:647px;height:56px;box-sizing:border-box;background:#fff;border:1.4px solid #ccd1d8;border-radius:6px;"></div>
<div class="t" style="left:1172px;top:896.00px;font-size:17.5px;color:#1c1c1c;letter-spacing:0.636px;">Fax Number</div>
<div class="a" style="left:1171px;top:917px;width:647px;height:56px;box-sizing:border-box;background:#fff;border:1.4px solid #ccd1d8;border-radius:6px;"></div>
<div class="t" style="left:489px;top:991.00px;font-size:17.5px;color:#1c1c1c;letter-spacing:0.547px;">Title</div>
<div class="a" style="left:488px;top:1012px;width:647px;height:56px;box-sizing:border-box;background:#fff;border:1.4px solid #ccd1d8;border-radius:6px;"></div>
<div class="t" style="left:1172px;top:991.00px;font-size:17.5px;color:#1c1c1c;letter-spacing:0.917px;">Company</div>
<div class="a" style="left:1171px;top:1012px;width:647px;height:56px;box-sizing:border-box;background:#fff;border:1.4px solid #ccd1d8;border-radius:6px;"></div>
<div class="t" style="left:489px;top:1086.00px;font-size:17.5px;color:#1c1c1c;letter-spacing:1.119px;">Department</div>
<div class="a" style="left:488px;top:1107px;width:647px;height:56px;box-sizing:border-box;background:#fff;border:1.4px solid #ccd1d8;border-radius:6px;"></div>
<div class="t" style="left:1172px;top:1086.00px;font-size:17.5px;color:#1c1c1c;letter-spacing:0.21px;">Email</div>
<div class="t" style="left:1221.1px;top:1086.00px;font-size:17px;color:#e8262a;">*</div>
<div class="a" style="left:1171px;top:1107px;width:647px;height:56px;box-sizing:border-box;background:#fff;border:1.8px solid #0b4fbf;border-radius:6px;"></div>
<div class="t" style="left:1189.8px;top:1124.00px;font-size:24px;color:#636363;letter-spacing:0.363px;">mc@mail.com</div>
<div class="t" style="left:489px;top:1181.00px;font-size:17.5px;color:#1c1c1c;letter-spacing:0.147px;">Custom Field 1</div>
<div class="a" style="left:488px;top:1202px;width:647px;height:56px;box-sizing:border-box;background:#fff;border:1.4px solid #ccd1d8;border-radius:6px;"></div>
<div class="t" style="left:489px;top:703.00px;font-size:17.5px;color:#1c1c1c;letter-spacing:0.87px;">Country</div>
<div class="t" style="left:1172px;top:703.00px;font-size:17.5px;color:#1c1c1c;letter-spacing:0.993px;">State/Province/Region</div>
<div class="t" style="left:1370.5px;top:702.00px;font-size:17px;color:#e8262a;">*</div>
<div class="a" style="left:488px;top:723px;width:647px;height:60px;box-sizing:border-box;background:#fff;border:1.4px solid #ccd1d8;border-radius:6px;"></div>
<div class="t" style="left:518.8px;top:746.00px;font-size:18.3px;color:#636363;letter-spacing:0.179px;">Canada</div>
<svg class="a" style="left:1095px;top:747px;" width="18" height="12" viewBox="0 0 18 12"><path d="M2.4 2.4 L9 9.2 L15.6 2.4" fill="none" stroke="#30353c" stroke-width="2.5" stroke-linecap="round" stroke-linejoin="round"/></svg>
<div class="a" style="left:1171px;top:723px;width:647px;height:60px;box-sizing:border-box;background:#fff;border:1.4px solid #ccd1d8;border-radius:6px;"></div>
<div class="t" style="left:1201.8px;top:746.00px;font-size:18.3px;color:#636363;letter-spacing:-0.255px;">PROTECTED - Alberta</div>
<svg class="a" style="left:1778px;top:747px;" width="18" height="12" viewBox="0 0 18 12"><path d="M2.4 2.4 L9 9.2 L15.6 2.4" fill="none" stroke="#30353c" stroke-width="2.5" stroke-linecap="round" stroke-linejoin="round"/></svg>
<div class="a" style="left:1347px;top:1120px;width:2px;height:30px;background:#222;"></div>
<div class="a" style="left:1612px;top:1288px;width:106px;height:53px;background:#eef1f3;border-radius:6px;"></div>
<div class="t" style="left:1638px;top:1306.00px;font-size:18.3px;color:#7a7a7a;letter-spacing:-0.193px;">Cancel</div>
<div class="a" style="left:1731px;top:1288px;width:92px;height:53px;background:#004ab5;border-radius:6px;"></div>
<div class="t" style="left:1757px;top:1307.00px;font-size:17.5px;color:#ffffff;letter-spacing:0.037px;-webkit-text-stroke:0.45px #fff;">Save</div>
<div class="a" style="left:0px;top:0px;width:2309px;height:5px;background:#000;"></div>
<div class="a" style="left:0px;top:1483px;width:2309px;height:3px;background:#000;"></div>
<div class="a" style="left:0px;top:0px;width:3px;height:1486px;background:#000;"></div>
<div class="a" style="left:2306px;top:0px;width:3px;height:1486px;background:#000;"></div>
</body></html>
